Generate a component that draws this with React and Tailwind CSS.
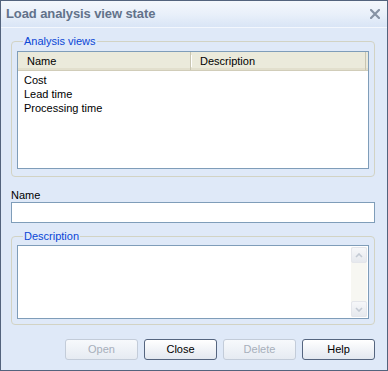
import React from 'react';

function XpButton({ label, disabled }) {
  return (
    <button
      type="button"
      className={
        'w-[73px] h-[21px] rounded-[3px] border text-[11px] leading-none ' +
        (disabled
          ? 'border-[#c3ccd9] text-[#a7afbb] bg-gradient-to-b from-[#f7f9fc] to-[#e6ebf2]'
          : 'border-[#55657f] text-black bg-gradient-to-b from-[#ffffff] to-[#e3e8f0]')
      }
    >
      {label}
    </button>
  );
}

export default function App() {
  return (
    <div className="w-[388px] h-[371px] border border-[#53637d] bg-[#dfe9f8] flex flex-col font-['Liberation_Sans',Arial,sans-serif] text-[11px] text-black">
      {/* Title bar */}
      <div className="h-[26px] shrink-0 flex items-center justify-between pl-[5px] pr-[6px] bg-gradient-to-b from-[#f4f7fc] via-[#e9f0fa] to-[#d9e5f6]">
        <span className="font-bold text-[13px] text-[#62728a] tracking-[-0.1px]">Load analysis view state</span>
        <svg width="10" height="10" viewBox="0 0 10 10" className="mr-[1px]">
          <path d="M1 1 L9 9 M9 1 L1 9" stroke="#8793a4" strokeWidth="2.2" strokeLinecap="square" />
        </svg>
      </div>

      {/* Body */}
      <div className="flex flex-col pl-[10px] pr-[12px] border-t border-[#f3f7fd]">
        <fieldset className="mt-[7px] border border-[#d2d3c4] rounded-[4px] px-[5px] pt-[3px] pb-[7px]">
          <legend className="ml-[6px] px-[1px] leading-[13px] text-[#0a46d6]">Analysis views</legend>
          <div className="h-[118px] border border-[#7f9db9] bg-white flex flex-col">
            <div className="h-[19px] flex bg-[#ebeadb] border-b border-[#d1cdb9] shadow-[inset_0_-2px_0_#e2dfcd]">
              <div className="w-[173px] flex items-center pl-[9px] border-r border-[#c8c5b2]">Name</div>
              <div className="w-[1px] bg-white my-[3px]" />
              <div className="w-[174px] flex items-center pl-[8px] border-r border-[#c8c5b2]">Description</div>
            </div>
            <div className="pt-[2px] pl-[6px] leading-[14px]">
              <div>Cost</div>
              <div>Lead time</div>
              <div>Processing time</div>
            </div>
          </div>
        </fieldset>

        <label className="mt-[12px] leading-[13px]">Name</label>
        <div className="mt-[0px] h-[21px] border border-[#7f9db9] bg-white" />

        <fieldset className="mt-[7px] border border-[#d2d3c4] rounded-[4px] px-[5px] pt-[2px] pb-[5px]">
          <legend className="ml-[6px] px-[1px] leading-[13px] text-[#0a46d6]">Description</legend>
          <div className="h-[74px] border border-[#7f9db9] bg-white flex justify-end p-[1px]">
            <div className="w-[16px] flex flex-col bg-[#f7f7f2]">
              <div className="h-[16px] rounded-[2px] border border-[#e4e6eb] bg-gradient-to-b from-[#f6f7f9] to-[#e6e9ee] flex items-center justify-center">
                <svg width="8" height="5" viewBox="0 0 8 5">
                  <path d="M1 4 L4 1 L7 4" fill="none" stroke="#c3cad4" strokeWidth="1.6" />
                </svg>
              </div>
              <div className="flex-1" />
              <div className="h-[16px] rounded-[2px] border border-[#e4e6eb] bg-gradient-to-b from-[#f6f7f9] to-[#e6e9ee] flex items-center justify-center">
                <svg width="8" height="5" viewBox="0 0 8 5">
                  <path d="M1 1 L4 4 L7 1" fill="none" stroke="#c3cad4" strokeWidth="1.6" />
                </svg>
              </div>
            </div>
          </div>
        </fieldset>

        <div className="mt-[14px] flex justify-end gap-[6px]">
          <XpButton label="Open" disabled />
          <XpButton label="Close" />
          <XpButton label="Delete" disabled />
          <XpButton label="Help" />
        </div>
      </div>
    </div>
  );
}
